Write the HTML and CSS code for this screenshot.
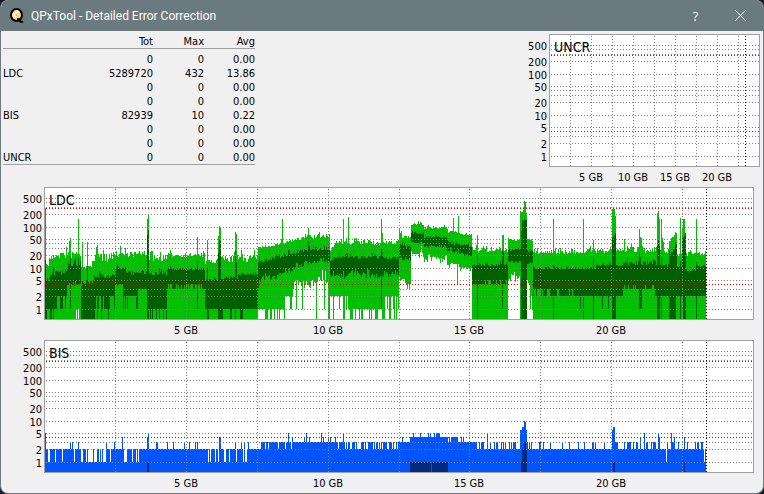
FILE: index.html
```html
<!DOCTYPE html>
<html lang="en">
<head>
    <meta charset="UTF-8">
    <meta name="viewport" content="width=device-width, initial-scale=1.0">
    <title>QPxTool - Detailed Error Correction</title>
    <link rel="stylesheet" href="styles.css">
</head>
<body>
    <div class="window">
        <header class="titlebar">
            <svg class="logo" width="16" height="16" viewBox="0 0 16 16" aria-hidden="true">
                <defs>
                    <linearGradient id="disc" x1="0" y1="0" x2="1" y2="1">
                        <stop offset="0" stop-color="#f09a20"/>
                        <stop offset="0.4" stop-color="#fff6dc"/>
                        <stop offset="0.65" stop-color="#ffd860"/>
                        <stop offset="1" stop-color="#f8a818"/>
                    </linearGradient>
                </defs>
                <ellipse cx="7.5" cy="7" rx="5.5" ry="6" fill="url(#disc)" stroke="#000" stroke-width="2"/>
                <circle cx="7.5" cy="7" r="1" fill="#f0a080"/>
                <path d="M8 11 Q11 11 11.5 13.5 Q12.5 14.5 14 13.5" fill="none" stroke="#000" stroke-width="2"/>
            </svg>
            <h1>QPxTool - Detailed Error Correction</h1>
            <button type="button" class="title-button" aria-label="Help">?</button>
            <button type="button" class="title-button" aria-label="Close">
                <svg width="11" height="11" viewBox="0 0 11 11"><path d="M0.5 0.5 L10.5 10.5 M10.5 0.5 L0.5 10.5" stroke="#fff" fill="none"/></svg>
            </button>
        </header>
        <main>
            <div class="summary">
                <table class="totals">
                    <thead>
                        <tr><th class="name"></th><th>Tot</th><th>Max</th><th>Avg</th></tr>
                    </thead>
                    <tbody>
                        <tr><th></th><td>0</td><td>0</td><td>0.00</td></tr>
                        <tr><th>LDC</th><td>5289720</td><td>432</td><td>13.86</td></tr>
                        <tr><th></th><td>0</td><td>0</td><td>0.00</td></tr>
                        <tr><th></th><td>0</td><td>0</td><td>0.00</td></tr>
                        <tr><th>BIS</th><td>82939</td><td>10</td><td>0.22</td></tr>
                        <tr><th></th><td>0</td><td>0</td><td>0.00</td></tr>
                        <tr><th></th><td>0</td><td>0</td><td>0.00</td></tr>
                        <tr><th>UNCR</th><td>0</td><td>0</td><td>0.00</td></tr>
                    </tbody>
                </table>
                <svg class="chart chart-small" data-name="UNCR"></svg>
            </div>
            <div class="charts">
                <svg class="chart" data-name="LDC"></svg>
                <svg class="chart" data-name="BIS"></svg>
            </div>
        </main>
    </div>
    <script src="charts.js"></script>
</body>
</html>
```
FILE: styles.css
```css
* {
    box-sizing: border-box;
}
body {
    margin: 0;
    background: #1c1828;
    font-family: "DejaVu Sans Condensed", Tahoma, "DejaVu Sans", sans-serif;
    font-size: 11px;
    color: #000;
}
.window {
    min-height: 100vh;
    background: #f0f0f0;
    border: 1px solid #6b7a7e;
    border-top: none;
    border-radius: 8px;
    overflow: hidden;
}
.titlebar {
    display: flex;
    align-items: center;
    height: 31px;
    padding-left: 8px;
    background: #6b7a7e;
    color: #fff;
}
.logo {
    margin-right: 6px;
}
h1 {
    flex: 1;
    margin: 0;
    font-family: Roboto, "Segoe UI", sans-serif;
    font-size: 12px;
    font-weight: normal;
}
.title-button {
    display: flex;
    align-items: center;
    justify-content: center;
    width: 45px;
    height: 31px;
    padding: 0;
    border: none;
    background: none;
    color: #fff;
    font-family: "Open Sans", "Segoe UI", sans-serif;
    font-size: 13px;
}
.title-button:hover {
    background: #7f8d91;
}
.summary {
    display: flex;
    justify-content: space-between;
    align-items: flex-start;
    padding: 3px 3px 0 2px;
}
.totals {
    width: 252px;
    border-collapse: separate;
    border-spacing: 0;
    table-layout: fixed;
    line-height: 12px;
    border-bottom: 1px solid #a0a0a0;
}
.totals th, .totals td {
    height: 14px;
    padding: 2px 0 0;
    font-weight: normal;
    text-align: right;
}
.totals thead th {
    width: 51px;
    height: 15px;
    border-bottom: 1px solid #a0a0a0;
}
.totals thead .name {
    width: auto;
}
.totals tbody th {
    text-align: left;
}
.totals tbody tr:first-child td {
    padding-top: 5px;
}
.charts {
    padding: 0 9px 0 19px;
}
.chart {
    display: block;
    width: 100%;
    height: 153px;
}
.chart-small {
    width: 235px;
}
.frame {
    fill: #fff;
    stroke: #a0a0a0;
}
.data, .frame, .grid, .limit, .end {
    shape-rendering: crispEdges;
}
.grid, .limit, .end {
    fill: none;
    stroke: #808080;
    stroke-dasharray: 1 2;
}
.limit {
    stroke: #e00000;
}
.end {
    stroke: #000;
}
.ldc-max {
    fill: #00c000;
}
.ldc-avg {
    fill: #006000;
}
.bis-max {
    fill: #0055ff;
}
.bis-avg {
    fill: #002b80;
}
.axis-y {
    text-anchor: end;
}
.axis-x {
    text-anchor: middle;
}
.chart-name {
    font-size: 14px;
}
```
FILE: charts.js
```js
const AXIS = 24;        // room for the value labels
const HEIGHT = 131;     // plot height inside the frame
const COLUMNS = 708;    // samples over the full 25 GB axis
const CAPACITY = 25;
const DISC_END = 23.36;

let seed = 7;
function rand() {
    seed = (seed * 16807) % 2147483647;
    return seed / 2147483647;
}

// level of a value on the log scale, measured from the plot top
function level(v) {
    return Math.round(120.6 - 41 * Math.log10(v));
}

// [from, to, start, end, noise] is a slope, [from, to, [a, b, ...]] picks one of the levels
function build(segments, spikes) {
    const out = [];
    for (const [from, to, a, b, noise] of segments) {
        for (let c = from; c < to; c++) {
            if (Array.isArray(a)) {
                out[c] = a[Math.floor(rand() * a.length)];
            } else {
                const base = a + (b - a) * (c - from) / (to - from);
                const up = rand() < 0.12 ? noise * 0.7 : 0;
                out[c] = Math.round(base + (rand() - 0.5) * noise - up);
            }
        }
    }
    for (const c in spikes) out[c] = spikes[c];
    return out;
}

const ldcTop = build([
    [0, 4, 77, 77, 3], [4, 10, 70, 70, 7], [10, 36, 67, 66, 8], [36, 47, 79, 79, 3],
    [47, 70, 69, 69, 10], [70, 104, 66, 66, 6], [104, 122, 70, 70, 6], [122, 160, 67, 67, 4],
    [160, 173, 74, 74, 5], [173, 213, 71, 70, 7], [213, 235, 60, 56, 2], [235, 260, 55, 50, 4],
    [260, 285, 49, 48, 5], [285, 290, 62, 57, 3], [290, 336, 54, 55, 5], [336, 354, 55, 55, 4],
    [354, 357, 44, 44, 4], [357, 366, 49, 48, 3], [366, 379, 36, 36, 3], [379, 402, 40, 40, 3],
    [402, 415, 44, 44, 3], [415, 427, 46, 47, 2], [427, 463, 62, 63, 4], [463, 475, 52, 52, 3],
    [475, 482, 24, 24, 2], [482, 488, 52, 52, 2], [488, 535, 64, 64, 4], [535, 567, 63, 63, 5],
    [567, 571, 21, 21, 1], [571, 579, 62, 62, 3], [579, 600, 61, 61, 7], [600, 624, 63, 63, 4],
    [624, 632, 54, 42, 3], [632, 640, 67, 66, 3], [640, 661, 66, 66, 5]
], {
    0: 20, 25: 50, 24: 53, 33: 31, 37: 54, 42: 54, 75: 58, 80: 60, 102: 31, 103: 27, 152: 49, 162: 52,
    173: 48, 174: 38, 175: 39, 190: 44, 191: 46, 237: 31, 263: 40, 298: 31, 303: 29, 336: 31, 337: 45,
    408: 30, 413: 28, 432: 47, 457: 47, 458: 47, 478: 22, 479: 13, 480: 14, 508: 31, 538: 31, 548: 52,
    570: 28, 579: 51, 594: 41, 595: 49, 596: 50, 612: 25, 613: 23, 614: 31, 616: 31, 617: 50, 618: 54,
    635: 30, 637: 40, 638: 31, 639: 31, 640: 48, 651: 31
});
const ldcAvgTop = build([
    [0, 5, 92, 92, 4], [5, 22, 85, 84, 6], [22, 36, 77, 75, 5], [36, 49, 95, 95, 6],
    [49, 70, 88, 88, 5], [70, 81, 79, 80, 4], [81, 122, 85, 85, 5], [122, 160, 81, 81, 3],
    [160, 193, 91, 90, 3], [193, 213, 86, 86, 2], [213, 263, 74, 61, 4], [263, 285, 61, 60, 5],
    [285, 303, 72, 66, 4], [303, 336, 68, 70, 4], [336, 354, 70, 70, 2], [354, 366, 58, 59, 4],
    [366, 379, 45, 45, 2], [379, 402, 49, 49, 2], [402, 427, 54, 59, 3], [427, 463, 77, 77, 3],
    [463, 476, 62, 62, 2], [476, 482, 32, 32, 3], [482, 488, 63, 63, 2], [488, 551, 80, 80, 3],
    [551, 567, 77, 77, 3], [567, 571, 50, 45, 4], [571, 577, 78, 78, 2], [577, 611, 75, 75, 4],
    [611, 624, 78, 78, 3], [624, 632, 66, 55, 8], [632, 637, 79, 79, 2], [637, 641, 50, 47, 4],
    [641, 651, 82, 82, 3], [651, 661, 78, 78, 3]
], {
    0: 72, 25: 69, 33: 70, 42: 79, 102: 47, 103: 42, 152: 73, 162: 80, 173: 65, 174: 52, 175: 53, 190: 63,
    191: 74, 263: 53, 336: 61, 337: 64, 432: 67, 457: 62, 458: 64, 476: 43, 508: 76, 548: 70, 594: 65,
    595: 69, 612: 58, 613: 51, 614: 58, 616: 69, 635: 73, 651: 74
});
const ldcAvgBottom = build([
    [0, 9, [121, 121, 131]], [9, 22, [108, 108, 121]], [22, 36, 97, 97, 3], [36, 49, [131]],
    [49, 70, [108, 121, 121, 131]], [70, 78, [96, 97]], [78, 93, [108, 108, 121]], [93, 102, [101]],
    [102, 104, [131]], [104, 122, [121, 121, 131]], [122, 160, [96, 101, 101]], [160, 213, [121]],
    [213, 225, 92, 89, 5], [225, 265, 91, 74, 5], [265, 285, 74, 73, 4], [285, 354, 88, 87, 6],
    [354, 366, 71, 71, 4], [366, 379, 55, 55, 2], [379, 402, 59, 59, 2], [402, 427, 62, 68, 3],
    [427, 463, [92, 96, 96, 96]], [463, 476, 74, 74, 2], [476, 482, [131]], [482, 488, 75, 75, 2],
    [488, 496, [101, 101, 108]], [496, 535, [101, 108, 108, 108]], [535, 567, [108]], [567, 571, [131]],
    [571, 578, [108]], [578, 610, [101, 101, 97]], [610, 624, [108]], [624, 631, [131]],
    [631, 638, [108]], [638, 641, [131]], [641, 661, [108]]
], {
    25: 121, 152: 121, 162: 131, 163: 131, 173: 131, 174: 131, 175: 131, 176: 131, 177: 131, 185: 131,
    186: 131, 190: 131, 195: 131, 196: 131, 197: 131, 213: 100, 336: 121, 432: 131, 457: 121, 508: 131,
    535: 121, 538: 131, 548: 131, 557: 121, 563: 121, 594: 121, 595: 121, 596: 121, 612: 131, 613: 131,
    614: 131, 616: 131, 635: 131, 651: 131
});
const ldcBottom = build([
    [0, 213, [131]], [213, 240, [121, 131, 121]], [240, 248, [108, 108, 121]], [248, 285, 97, 93, 10],
    [285, 303, [108, 108, 131, 121]], [303, 335, [121, 121, 121, 131]], [335, 354, [121, 131, 108]],
    [354, 366, 90, 92, 14], [366, 379, 68, 67, 8], [379, 402, 73, 71, 8], [402, 427, 76, 84, 7],
    [427, 463, [131]], [463, 475, 90, 91, 9], [475, 482, [131]], [482, 485, 94, 99, 3],
    [485, 488, [108, 108, 121]], [488, 661, [131]]
], {31: 121, 33: 121, 251: 121, 257: 121, 271: 131, 279: 121, 283: 131, 284: 131, 362: 101, 364: 101, 412: 96});

const bisTop = build([
    [0, 36, [2, 2, 2, 1]], [36, 70, [2, 1]], [70, 94, [2, 2, 2, 1]], [94, 161, [2]],
    [161, 204, [2, 2, 1]], [204, 213, [2]], [213, 247, [3, 3, 2]], [247, 292, [3, 3, 3, 3, 4]],
    [292, 354, [3, 3, 2, 2, 3]], [354, 366, [3, 3, 4]], [366, 403, [4, 4, 4, 5]], [403, 420, [4, 4, 3]],
    [420, 430, [3, 3, 3, 4]], [430, 475, [2, 3]], [475, 482, [6]], [482, 488, [3, 2]],
    [488, 567, [2, 2, 2, 2, 3]], [567, 570, [7]], [570, 661, [2, 2, 3]]
], {
    0: 5, 25: 3, 27: 3, 33: 3, 61: 3, 69: 3, 77: 4, 102: 4, 103: 5, 111: 3, 112: 3, 122: 3, 128: 3, 139: 3,
    144: 3, 150: 3, 152: 3, 174: 4, 175: 4, 190: 3, 196: 3, 199: 3, 203: 3, 243: 5, 261: 5, 276: 5, 298: 5,
    442: 5, 477: 7, 478: 7, 479: 10, 480: 9, 567: 6, 568: 7, 595: 4, 599: 5, 613: 5, 614: 4, 621: 1,
    626: 5, 629: 4, 639: 4, 659: 1
}).map(level);

const bisAvgTop = [];
for (let c = 365; c < 403; c++) if (c !== 386) bisAvgTop[c] = 121;
for (let c = 476; c < 482; c++) bisAvgTop[c] = 108;
Object.assign(bisAvgTop, {102: 121, 103: 121, 476: 121, 479: 101, 480: 101, 481: 108, 568: 121, 569: 121, 639: 121});

const SERIES = {
    UNCR: [],
    LDC: [
        {css: 'ldc-max', top: ldcTop, bottom: ldcBottom},
        {css: 'ldc-avg', top: ldcAvgTop, bottom: ldcAvgBottom}
    ],
    BIS: [
        {css: 'bis-max', top: bisTop},
        {css: 'bis-avg', top: bisAvgTop}
    ]
};

function drawChart(svg) {
    const width = svg.clientWidth - AXIS - 2;
    const left = AXIS + 1;
    const x = gb => Math.floor(left + gb / CAPACITY * width) + 0.5;
    const name = svg.dataset.name;
    let html = `<rect class="frame" x="${AXIS + 0.5}" y="0.5" width="${width + 1}" height="${HEIGHT + 1}"/>`;

    for (const s of SERIES[name]) {
        const step = width / COLUMNS;
        let d = '';
        s.top.forEach((top, c) => {
            const bottom = s.bottom ? s.bottom[c] : HEIGHT;
            d += `M${left + c * step} ${top + 1}h${step}V${bottom + 1}h${-step}z`;
        });
        html += `<path class="data ${s.css}" d="${d}"/>`;
    }

    let grid = '';
    for (const v of [1, 2, 3, 5, 10, 20, 30, 40, 50, 100, 200, 300, 400, 500]) {
        grid += `M${left + 1} ${level(v) + 1.5}H${left + width}`;
    }
    for (let gb = 2.5; gb < CAPACITY; gb += 2.5) {
        grid += `M${x(gb)} 2V${HEIGHT + 1}`;
    }
    html += `<path class="grid" d="${grid}"/>`;
    html += `<path class="limit" d="M${left + 1} ${level(4) + 1.5}H${left + width}M${left + 1} ${level(290) + 1.5}H${left + width}"/>`;
    html += `<path class="end" d="M${x(DISC_END)} 2V${HEIGHT + 1}"/>`;

    for (const v of [500, 200, 100, 50, 20, 10, 5, 2, 1]) {
        html += `<text class="axis-y" x="${AXIS - 2}" y="${level(v) + 6}">${v}</text>`;
    }
    for (const gb of [5, 10, 15, 20]) {
        html += `<text class="axis-x" x="${Math.floor(x(gb))}" y="147">${gb} GB</text>`;
    }
    html += `<text class="chart-name" x="${AXIS + 5}" y="18">${name}</text>`;
    svg.innerHTML = html;
}

function drawAll() {
    document.querySelectorAll('.chart').forEach(drawChart);
}

window.addEventListener('resize', drawAll);
drawAll();
```
